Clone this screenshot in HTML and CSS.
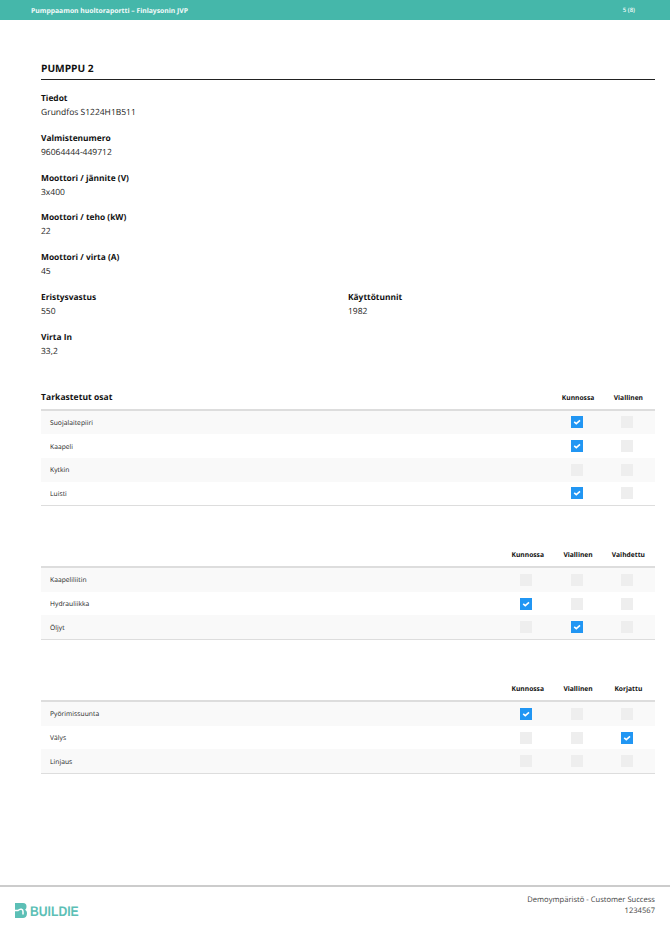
FILE: index.html
```html
<!DOCTYPE html>
<html lang="fi">
<head>
<meta charset="utf-8">
<title>Pumppaamon huoltoraportti</title>
<link rel="stylesheet" href="styles.css">
</head>
<body>
<header class="topbar">
  <span>Pumppaamon huoltoraportti – Finlaysonin JVP</span>
  <span class="page">5 (8)</span>
</header>
<main class="content">
  <h1 class="section-title">PUMPPU 2</h1>
  <div class="field"><div class="label">Tiedot</div><div class="value">Grundfos S1224H1B511</div></div>
  <div class="field"><div class="label">Valmistenumero</div><div class="value">96064444-449712</div></div>
  <div class="field"><div class="label">Moottori / jännite (V)</div><div class="value">3x400</div></div>
  <div class="field"><div class="label">Moottori / teho (kW)</div><div class="value">22</div></div>
  <div class="field"><div class="label">Moottori / virta (A)</div><div class="value">45</div></div>
  <div class="field-row">
    <div class="field"><div class="label">Eristysvastus</div><div class="value">550</div></div>
    <div class="field"><div class="label">Käyttötunnit</div><div class="value">1982</div></div>
  </div>
  <div class="field"><div class="label">Virta In</div><div class="value">33,2</div></div>

  <section class="table t1">
    <div class="row head"><div class="name title">Tarkastetut osat</div><div class="col">Kunnossa</div><div class="col">Viallinen</div></div>
    <div class="row odd"><div class="name">Suojalaitepiiri</div><div class="col"><span class="box on"><svg viewBox="0 0 12 12"><path d="M3.200 5.800 5.300 7.600 9 4.300"/></svg></span></div><div class="col"><span class="box"></span></div></div>
    <div class="row"><div class="name">Kaapeli</div><div class="col"><span class="box on"><svg viewBox="0 0 12 12"><path d="M3.200 5.800 5.300 7.600 9 4.300"/></svg></span></div><div class="col"><span class="box"></span></div></div>
    <div class="row odd"><div class="name">Kytkin</div><div class="col"><span class="box"></span></div><div class="col"><span class="box"></span></div></div>
    <div class="row"><div class="name">Luisti</div><div class="col"><span class="box on"><svg viewBox="0 0 12 12"><path d="M3.200 5.800 5.300 7.600 9 4.300"/></svg></span></div><div class="col"><span class="box"></span></div></div>
  </section>

  <section class="table t2">
    <div class="row head"><div class="name"></div><div class="col">Kunnossa</div><div class="col">Viallinen</div><div class="col">Vaihdettu</div></div>
    <div class="row odd"><div class="name">Kaapeliliitin</div><div class="col"><span class="box"></span></div><div class="col"><span class="box"></span></div><div class="col"><span class="box"></span></div></div>
    <div class="row"><div class="name">Hydrauliikka</div><div class="col"><span class="box on"><svg viewBox="0 0 12 12"><path d="M3.200 5.800 5.300 7.600 9 4.300"/></svg></span></div><div class="col"><span class="box"></span></div><div class="col"><span class="box"></span></div></div>
    <div class="row odd"><div class="name">Öljyt</div><div class="col"><span class="box"></span></div><div class="col"><span class="box on"><svg viewBox="0 0 12 12"><path d="M3.200 5.800 5.300 7.600 9 4.300"/></svg></span></div><div class="col"><span class="box"></span></div></div>
  </section>

  <section class="table t3">
    <div class="row head"><div class="name"></div><div class="col">Kunnossa</div><div class="col">Viallinen</div><div class="col">Korjattu</div></div>
    <div class="row odd"><div class="name">Pyörimissuunta</div><div class="col"><span class="box on"><svg viewBox="0 0 12 12"><path d="M3.200 5.800 5.300 7.600 9 4.300"/></svg></span></div><div class="col"><span class="box"></span></div><div class="col"><span class="box"></span></div></div>
    <div class="row"><div class="name">Välys</div><div class="col"><span class="box"></span></div><div class="col"><span class="box"></span></div><div class="col"><span class="box on"><svg viewBox="0 0 12 12"><path d="M3.200 5.800 5.300 7.600 9 4.300"/></svg></span></div></div>
    <div class="row odd"><div class="name">Linjaus</div><div class="col"><span class="box"></span></div><div class="col"><span class="box"></span></div><div class="col"><span class="box"></span></div></div>
  </section>
</main>
<footer class="footer">
  <div class="logo">
    <svg class="logo-mark" viewBox="0 0 12 15"><path class="mark-body" d="M0 0H8C10.500 0 11.500 1.500 11.500 3.500 11.500 5 11 6 10 6.800 11.500 7.500 12 9 12 10.500 12 13.500 10 15 8 15H0Z"/><path class="mark-cut" d="M0 7.500H3C5.500 5 8 6.500 8 8.500V11.500"/></svg>
    <span class="logo-text">BUILDIE</span>
  </div>
  <div class="org"><div>Demoympäristö - Customer Success</div><div>1234567</div></div>
</footer>
</body>
</html>
```
FILE: styles.css
```css
html, body { margin: 0; padding: 0; }
body { width: 670px; height: 948px; overflow: hidden; background: #fff; color: #111; font-family: "Open Sans", sans-serif; text-rendering: geometricPrecision; display: flex; flex-direction: column; }
.topbar { height: 20px; background: #45b7aa; color: #f4fbfa; font-size: 6.800px; font-weight: 700; display: flex; justify-content: space-between; align-items: center; padding: 0 35px 0 31px; box-sizing: border-box; flex: none; }
.page { font-weight: 600; font-size: 6px; }
.content { flex: 1; padding: 41px 15px 0 41px; }
.section-title { margin: 0; font-size: 10.200px; line-height: 15px; font-weight: 700; border-bottom: 1px solid #222; padding-bottom: 3px; }
.field { height: 39.800px; }
.section-title + .field { margin-top: 12px; }
.label { font-weight: 700; font-size: 8.400px; line-height: 13px; }
.value { font-size: 8.500px; line-height: 13px; margin-top: 1px; color: #222; }
.field-row { display: grid; grid-template-columns: 307px 1fr; }
.t1 { margin-top: 20px; }
.t2 { margin-top: 42px; }
.t3 { margin-top: 42px; }
.row { display: flex; align-items: center; height: 23.650px; padding-right: 3px; }
.row.head { height: 18px; border-bottom: 2px solid #ddd; align-items: flex-start; font-size: 6.700px; font-weight: 700; }
.row.head .col { position: relative; left: 1.500px; line-height: 13px; }
.row.odd { background: #f9f9f9; }
.table .row:last-child { border-bottom: 1px solid #ddd; }
.name { flex: 1; padding-left: 9px; font-size: 6.700px; font-weight: 400; color: #222; letter-spacing: .05px; }
.name.title { padding-left: 0; font-size: 8.500px; line-height: 13px; font-weight: 700; color: #111; }
.col { width: 50.300px; text-align: center; line-height: 11px; }
.box { display: block; width: 12px; height: 12px; margin: 0 auto; background: #eee; }
.box.on { background: #2196f3; }
.box svg { display: block; width: 12px; height: 12px; fill: none; stroke: #fff; stroke-width: 1.600; }
.footer { height: 63px; border-top: 2px solid #ccc; box-sizing: border-box; flex: none; display: flex; justify-content: space-between; padding: 8px 15px 0 15px; }
.logo { display: flex; align-items: center; gap: 3px; height: 31px; color: #5cbfb6; }
.logo-mark { width: 12px; height: 15px; }
.mark-body { fill: #5cbfb6; }
.mark-cut { fill: none; stroke: #fff; stroke-width: 1.500; }
.logo-text { font-family: "Liberation Sans", sans-serif; font-weight: 700; font-size: 14px; transform: scaleX(.87); transform-origin: left center; }
.org { text-align: right; font-size: 7.600px; line-height: 11px; color: #444; }
```
